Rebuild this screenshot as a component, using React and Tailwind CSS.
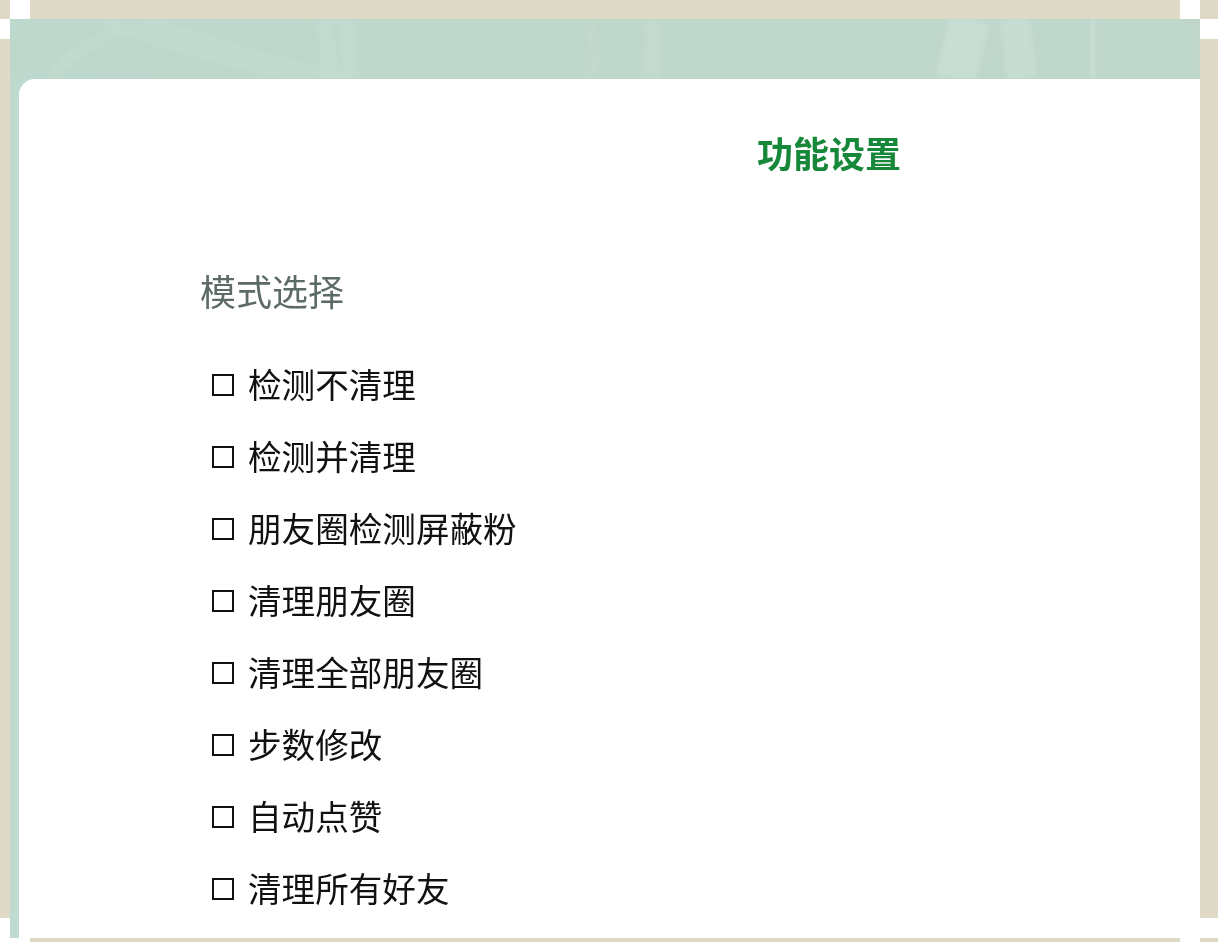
import React from 'react';

const modes = [
  '检测不清理',
  '检测并清理',
  '朋友圈检测屏蔽粉',
  '清理朋友圈',
  '清理全部朋友圈',
  '步数修改',
  '自动点赞',
  '清理所有好友',
];

const HeaderTexture = () => (
  <svg className="h-full w-full blur-[2px]" viewBox="0 0 1190 60" preserveAspectRatio="none" fill="none">
    <path d="M90 0C150 25 210 40 300 60M130 0C190 20 250 42 340 60" stroke="#c9e0d5" strokeWidth="12" opacity="0.35" />
    <path d="M40 60C60 35 80 25 110 10" stroke="#c9e0d5" strokeWidth="12" opacity="0.35" />
    <path d="M315 0L320 60M335 0L342 60" stroke="#c9e0d5" strokeWidth="16" opacity="0.4" />
    <path d="M585 0C575 20 590 40 580 60" stroke="#cde2d8" strokeWidth="2" opacity="0.5" />
    <path d="M640 0C650 20 635 40 645 60" stroke="#c9e0d5" strokeWidth="14" opacity="0.35" />
    <path d="M960 0L945 60" stroke="#cde3d9" strokeWidth="40" opacity="0.6" />
    <path d="M1005 0L1012 60" stroke="#cde3d9" strokeWidth="30" opacity="0.5" />
    <path d="M1083 0L1083 60" stroke="#d3e8de" strokeWidth="3" opacity="0.8" />
  </svg>
);

const ModeRow = ({ label }) => (
  <label className="flex h-[72px] items-center pl-3">
    <span className="h-[22px] w-[22px] shrink-0 border-[2.5px] border-[#111]" />
    <span className="mb-[2px] ml-[14px] text-[33.6px] leading-none text-[#111]">{label}</span>
  </label>
);

export default function App() {
  return (
    <div
      className="grid h-[942px] w-[1218px] grid-cols-[10px_20px_1150px_20px_18px] grid-rows-[19px_20px_879px_20px_4px] overflow-hidden bg-white"
      style={{ fontFamily: '"Microsoft YaHei", "Noto Sans CJK SC", sans-serif' }}
    >
      {/* Frame pieces */}
      <div className="bg-[#dfd9c8]" />
      <div />
      <div className="bg-[#dfd9c8]" />
      <div />
      <div className="bg-[#dfd9c8]" />
      <div className="col-start-1 row-start-3 bg-[#dfd9c8]" />
      <div className="col-start-5 row-start-3 bg-[#dfd9c8]" />
      <div className="col-start-3 row-start-5 bg-[#dcd9c4]" />
      <div className="col-start-5 row-start-5 bg-[#dcd9c4]" />

      {/* Panel */}
      <div className="col-span-3 col-start-2 row-span-3 row-start-2 flex flex-col bg-[#bfdbd0]">
        <div className="h-[60px] shrink-0 overflow-hidden bg-gradient-to-r from-[#bdd8cd] via-[#c0d8cb] to-[#bfd6cb]">
          <HeaderTexture />
        </div>
        <div className="ml-[9px] min-h-0 flex-1 overflow-hidden rounded-tl-2xl bg-white">
          <div className="blur-[0.4px]">
            <h1 className="mt-[53px] pl-[738px] text-[36px] leading-[40px] font-bold text-[#17883a]">功能设置</h1>
            <h2 className="mt-[98px] pl-[181px] text-[36px] leading-[40px] font-normal text-[#5c6b68]">模式选择</h2>
            <div className="mt-[39px] pl-[181px]">
              {modes.map((m) => (
                <ModeRow key={m} label={m} />
              ))}
            </div>
          </div>
        </div>
      </div>
    </div>
  );
}
